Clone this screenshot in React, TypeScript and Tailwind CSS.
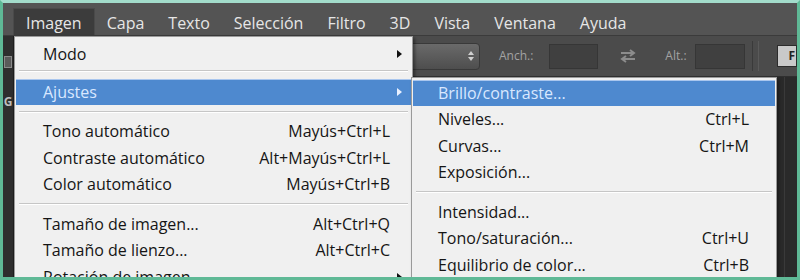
import React from "react";

const font = { fontFamily: '"Open Sans", "Noto Sans", sans-serif' };

function Arrow({ light }: { light?: boolean }) {
  return (
    <svg width="5" height="8" viewBox="0 0 5 8" className="absolute right-[9px] top-1/2 -translate-y-1/2">
      <path d="M0 0 L5 4 L0 8 Z" fill={light ? "#e8f0ff" : "#111"} />
    </svg>
  );
}

type Item = { label: string; sc?: string; sub?: boolean; hl?: boolean } | "sep" | "sep1";

function Menu({ items, pl, pr }: { items: Item[]; pl: string; pr: string }) {
  return (
    <>
      {items.map((it, i) =>
        it === "sep" || it === "sep1" ? (
          <div
            key={i}
            className={`${it === "sep1" ? "h-[11px] pt-[2px]" : "h-[13px] justify-center"} flex flex-col mx-[4px]`}
          >
            <div className="h-px bg-[#c6c6c6]" />
            <div className="h-px bg-white" />
          </div>
        ) : (
          <div
            key={i}
            className={`relative h-[26.5px] flex items-center mx-px ${pl} ${pr} ${
              it.hl ? "bg-[#4e89cf] text-[#d9e8ff] border-t border-[#a9c6ee]" : "text-[#151515]"
            }`}
          >
            <span className="flex-1 whitespace-nowrap">{it.label}</span>
            {it.sc && <span className="whitespace-nowrap">{it.sc}</span>}
            {it.sub && <Arrow light={it.hl} />}
          </div>
        )
      )}
    </>
  );
}

export default function App() {
  const menuBar = ["Imagen", "Capa", "Texto", "Selección", "Filtro", "3D", "Vista", "Ventana", "Ayuda"];
  const mainItems: Item[] = [
    { label: "Modo", sub: true },
    "sep1",
    { label: "Ajustes", sub: true, hl: true },
    "sep",
    { label: "Tono automático", sc: "Mayús+Ctrl+L" },
    { label: "Contraste automático", sc: "Alt+Mayús+Ctrl+L" },
    { label: "Color automático", sc: "Mayús+Ctrl+B" },
    "sep",
    { label: "Tamaño de imagen...", sc: "Alt+Ctrl+Q" },
    { label: "Tamaño de lienzo...", sc: "Alt+Ctrl+C" },
    { label: "Rotación de imagen", sub: true },
  ];
  const subItems: Item[] = [
    { label: "Brillo/contraste...", hl: true },
    { label: "Niveles...", sc: "Ctrl+L" },
    { label: "Curvas...", sc: "Ctrl+M" },
    { label: "Exposición..." },
    "sep",
    { label: "Intensidad..." },
    { label: "Tono/saturación...", sc: "Ctrl+U" },
    { label: "Equilibrio de color...", sc: "Ctrl+B" },
  ];
  return (
    <div
      className="w-[800px] h-[280px] overflow-hidden border-[3px] border-[#5fb996] border-t-[#a3dccb] bg-[#2a2a2a] flex flex-col text-[16px]"
      style={font}
    >
      {/* menu bar */}
      <div className="h-[33px] bg-[#545454] flex items-end pl-[10px] border-b border-[#3b3b3b] shrink-0 text-[16px]">
        {menuBar.map((m) => (
          <div
            key={m}
            className={`h-[27px] px-[12px] pt-[2px] flex items-center text-[#e6e6e6] ${
              m === "Imagen" ? "bg-[#3c3c3c] border-t border-x border-[#4a4a4a]" : ""
            }`}
          >
            {m}
          </div>
        ))}
      </div>

      {/* content */}
      <div className="relative flex-1 flex">
        {/* left tool strip */}
        <div className="w-[11px] bg-[#2e2e2e] flex flex-col items-center shrink-0 border-r border-[#1e1e1e]">
          <div className="mt-[20px] w-[8px] h-[12px] border border-[#8a8a8a] bg-[#5a5a5a]" />
          <div className="mt-[28px] text-[12px] leading-none text-[#bdbdbd] font-bold">G</div>
        </div>
        <div className="flex-1 flex flex-col">
          {/* options toolbar */}
          <div className="h-[41px] bg-[#4b4b4b] flex items-center border-b border-[#2f2f2f] text-[12px] text-[#a3a3a3] shrink-0">
            <div className="ml-[326px] w-[140px] h-[27px] rounded-sm bg-gradient-to-b from-[#6a6a6a] to-[#4e4e4e] border border-[#393939] flex items-center justify-end pr-[4px]">
              <svg width="8" height="12" viewBox="0 0 8 12">
                <path d="M4 1 L7 5 L1 5 Z M4 11 L7 7 L1 7 Z" fill="#cfcfcf" />
              </svg>
            </div>
            <span className="ml-[19px]">Anch.:</span>
            <div className="ml-[16px] w-[49px] h-[25px] bg-[#404040] border border-[#363636]" />
            <svg className="ml-[20px]" width="20" height="16" viewBox="0 0 20 16">
              <path d="M3 5 H15 M12 2 L16 5 L12 8 M17 11 H5 M8 8 L4 11 L8 14" stroke="#8c8c8c" strokeWidth="2" fill="none" />
            </svg>
            <span className="ml-[27px]">Alt.:</span>
            <div className="ml-[8px] w-[50px] h-[25px] bg-[#404040] border border-[#363636]" />
            <div className="ml-[7px] w-px h-[30px] bg-[#3a3a3a]" />
            <div className="ml-[5px] w-px h-[30px] bg-[#5a5a5a]" />
            <div className="ml-auto w-[20px] h-[22px] bg-[#c9c9c9] border border-[#2c2c2c] text-[#222] text-[12px] font-bold flex items-center justify-end pr-px">
              F
            </div>
          </div>
          {/* canvas area */}
          <div className="flex-1 flex justify-end">
            <div className="w-px bg-[#3a3a3a] mr-[12px]" />
          </div>
        </div>

        {/* main dropdown */}
        <div className="absolute left-[11px] top-0 w-[399px] h-[260px] bg-[#f0f0f0] border border-[#9a9a9a] pt-[4px] shadow-[2px_2px_3px_rgba(0,0,0,0.4)]">
          <Menu items={mainItems} pl="pl-[27px]" pr="pr-[21px]" />
        </div>

        {/* submenu */}
        <div className="absolute left-[408px] top-[41px] w-[366px] h-[220px] bg-[#f0f0f0] border border-[#9a9a9a] pt-[1.5px] shadow-[2px_2px_3px_rgba(0,0,0,0.4)]">
          <Menu items={subItems} pl="pl-[25px]" pr="pr-[26px]" />
        </div>
      </div>
    </div>
  );
}
